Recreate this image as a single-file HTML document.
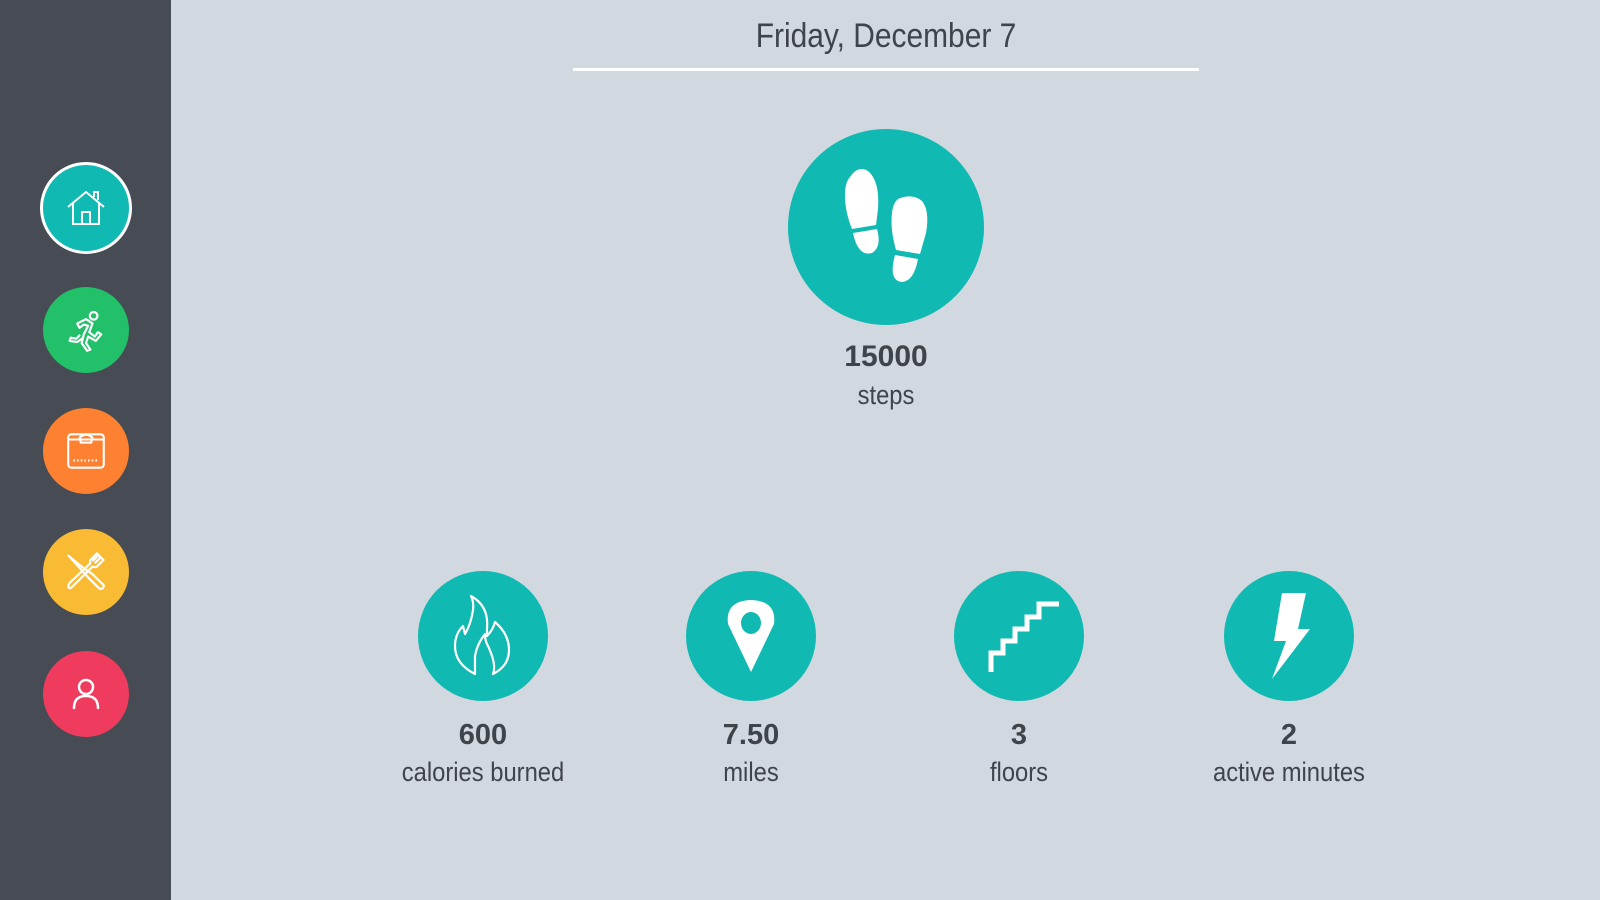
<!DOCTYPE html>
<html><head><meta charset="utf-8"><style>
html,body{margin:0;padding:0;width:1600px;height:900px;overflow:hidden;background:#d1d8e0;font-family:"Liberation Sans",sans-serif;color:#3f434a}
.side{position:absolute;left:0;top:0;width:171px;height:900px;background:#474b53}
.c{position:absolute;border-radius:50%;display:flex;align-items:center;justify-content:center}
.t{position:absolute;text-align:center;width:400px;white-space:nowrap}
.n{font-family:"Liberation Sans",sans-serif;font-weight:bold;font-size:29px;color:#3f434a}
.l{font-family:"Liberation Sans",sans-serif;font-size:27px;color:#3f434a;transform:scaleX(0.88)}
</style></head><body>
<div class="side"></div>
<div class="c" style="left:40px;top:162px;width:86px;height:86px;background:#10b9b1;border:3px solid #fff">
<svg width="48" height="48" viewBox="0 0 48 48" fill="none" stroke="#fff" stroke-width="2"><path d="M6 23 L24 8 L42 23 M11 19 V40 H37 V19 M20 40 V28 H28 V40 M32 13 V8 H36 V16"/></svg></div>
<div class="c" style="left:43px;top:287px;width:86px;height:86px;background:#22c069">
<svg width="48" height="48" viewBox="0 0 44 44" fill="none" stroke="#fff" stroke-width="2" stroke-linejoin="round" stroke-linecap="round"><circle cx="29" cy="9" r="3.5"/><path d="M14 16 L22 12 L28 16 L25 24 L30 28 L33 24 L36 26 L31 32 L24 28 L22 34 L26 40 L23 41 L18 34 L20 26 L24 18 L20 17 L16 20 Z M18 30 L14 33 L7 32 L8 29 L13 30 L16 27"/></svg></div>
<div class="c" style="left:43px;top:408px;width:86px;height:86px;background:#fd8130">
<svg width="46" height="46" viewBox="0 0 44 44" fill="none" stroke="#fff" stroke-width="2"><rect x="5" y="6" width="34" height="32" rx="3"/><path d="M5 11 H39 M16 9 Q22 4 28 9 L27 14 H17 Z"/><path d="M10 31 H34" stroke-dasharray="1.5 2"/></svg></div>
<div class="c" style="left:43px;top:529px;width:86px;height:86px;background:#f9bb33">
<svg width="48" height="48" viewBox="0 0 44 44" fill="none" stroke="#fff" stroke-width="2" stroke-linejoin="round"><path d="M6 7 L24 27 L33 36 Q36 39 38 36 Q39 34 36 32 L28 24 Q16 16 6 7 Z"/><path d="M32 5 L38 11 L32 17 Q30 18 28 17 L10 35 Q7 38 6 36 Q5 34 8 31 L26 14 Q25 12 27 10 Z M33 7 L28 12 M35 9 L30 14"/></svg></div>
<div class="c" style="left:43px;top:651px;width:86px;height:86px;background:#ef3b5d">
<svg width="40" height="40" viewBox="0 0 40 40" fill="none" stroke="#fff" stroke-width="2.5" stroke-linecap="round"><circle cx="20" cy="13" r="7"/><path d="M8 34 Q8 22 20 22 Q32 22 32 34"/></svg></div>

<div class="t l" style="left:686px;top:17px;font-size:34px">Friday, December 7</div>
<div style="position:absolute;left:573px;top:68px;width:626px;height:3px;background:#fff"></div>

<div class="c" style="left:788px;top:129px;width:196px;height:196px;background:#10b9b1">
<svg width="196" height="196" viewBox="0 0 196 196" style="position:absolute;left:0;top:0"><g fill="#fff">
<path d="M62 48 Q70 36 80 42 Q92 52 90 80 L88 96 L64 100 Q56 80 57 62 Q58 52 62 48Z"/>
<path d="M65 104 L89 100 Q94 118 84 124 Q70 128 65 104Z"/>
<path d="M110 70 Q124 64 134 72 Q142 82 138 104 L132 125 L108 121 Q102 100 104 84 Q105 74 110 70Z"/>
<path d="M107 126 L130 130 Q126 152 114 153 Q100 152 107 126Z"/></g></svg></div>
<div class="t n" style="left:686px;top:340px;font-size:30px">15000</div>
<div class="t l" style="left:686px;top:380px">steps</div>

<div class="c" style="left:418px;top:571px;width:130px;height:130px;background:#10b9b1">
<svg width="72" height="84" viewBox="0 0 72 84" fill="none" stroke="#fff" stroke-width="2.2" stroke-linejoin="round"><path d="M28 80 Q8 70 8 52 Q8 40 16 32 L18 40 Q24 30 26 16 Q27 8 24 2 Q42 12 40 34 Q40 38 40 42 Q46 36 48 28 Q62 40 62 56 Q62 72 46 80 Q50 70 40 50 Q38 46 38 40 Q30 50 28 62 Z"/></svg></div>
<div class="c" style="left:686px;top:571px;width:130px;height:130px;background:#10b9b1">
<svg width="60" height="80" viewBox="0 0 60 80"><path fill="#fff" fill-rule="evenodd" d="M30 76 L7 28 Q4 5 30 4 Q56 5 53 28 Z M30 16 A10 11 0 1 0 30 38 A10 11 0 1 0 30 16 Z"/></svg></div>
<div class="c" style="left:954px;top:571px;width:130px;height:130px;background:#10b9b1">
<svg width="80" height="80" viewBox="0 0 80 80" fill="none" stroke="#fff" stroke-width="5"><path d="M12 76 V57 H24 V45 H36 V33 H48 V21 H60 V8 H80"/></svg></div>
<div class="c" style="left:1224px;top:571px;width:130px;height:130px;background:#10b9b1">
<svg width="50" height="90" viewBox="0 0 50 90"><path fill="#fff" d="M18 2 H42 L34 38 L46 38 L8 88 L22 50 L10 50 Z"/></svg></div>

<div class="t n" style="left:283px;top:719px">600</div>
<div class="t l" style="left:283px;top:757px">calories burned</div>
<div class="t n" style="left:551px;top:719px">7.50</div>
<div class="t l" style="left:551px;top:757px">miles</div>
<div class="t n" style="left:819px;top:719px">3</div>
<div class="t l" style="left:819px;top:757px">floors</div>
<div class="t n" style="left:1089px;top:719px">2</div>
<div class="t l" style="left:1089px;top:757px">active minutes</div>
</body></html>
